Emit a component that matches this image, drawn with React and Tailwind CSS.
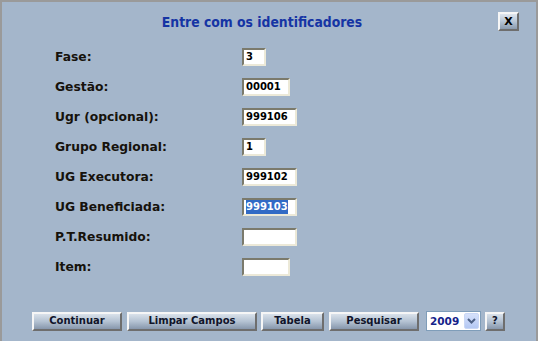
import React from "react";

const fields = [
  { label: "Fase:", value: "3", w: "w-[24px]" },
  { label: "Gestão:", value: "00001", w: "w-[48px]" },
  { label: "Ugr (opcional):", value: "999106", w: "w-[55px]" },
  { label: "Grupo Regional:", value: "1", w: "w-[24px]" },
  { label: "UG Executora:", value: "999102", w: "w-[55px]" },
  { label: "UG Beneficiada:", value: "999103", w: "w-[55px]", selected: true },
  { label: "P.T.Resumido:", value: "", w: "w-[55px]" },
  { label: "Item:", value: "", w: "w-[48px]" },
];

const btn =
  "h-[19px] flex items-center justify-center border-2 border-t-[#f6f6f6] border-l-[#f6f6f6] border-b-[#6e6e6e] border-r-[#6e6e6e] bg-gradient-to-b from-[#d9e1ea] via-[#b4c2d2] to-[#8797ac] text-[10px] font-bold text-[#10142a] leading-none";

function Field({ label, value, w, selected }) {
  return (
    <div className="flex items-center h-[30px]">
      <div className="w-[187px] text-[12.3px] font-bold text-[#16120c]">{label}</div>
      <div
        className={`${w} h-[18px] flex items-center bg-white border-2 border-t-[#7b7a6c] border-l-[#7b7a6c] border-b-[#ece9d8] border-r-[#ece9d8] pl-[2px] text-[10px] font-bold text-black leading-none overflow-hidden`}
      >
        {selected ? <span className="bg-[#316ac5] text-white py-[2px]">{value}</span> : value}
      </div>
    </div>
  );
}

export default function App() {
  return (
    <div className="w-[538px] h-[341px] bg-[#a4b6cb] border-t-2 border-l-2 border-r-2 border-[#9a9a9a] font-['DejaVu_Sans',sans-serif] overflow-hidden">
      {/* Header */}
      <div className="relative h-[40px] flex items-center justify-center pr-[14px]">
        <h1 className="font-['DejaVu_Sans_Condensed','Liberation_Sans',sans-serif] text-[13.8px] font-bold text-[#1534a4]">
          Entre com os identificadores
        </h1>
        <button className="absolute top-[10px] right-[17px] w-[21px] h-[19px] flex items-center justify-center border-2 border-t-[#f6f6f6] border-l-[#f6f6f6] border-b-[#6e6e6e] border-r-[#6e6e6e] bg-gradient-to-b from-[#dfe6ee] via-[#b7c5d5] to-[#8a9aae] text-[11px] font-bold text-black leading-none">
          X
        </button>
      </div>

      {/* Fields */}
      <div className="pl-[53px]">
        {fields.map((f) => (
          <Field key={f.label} {...f} />
        ))}
      </div>

      {/* Actions */}
      <div className="flex items-center mt-[29px] pl-[30px]">
        <button className={`${btn} w-[90px]`}>Continuar</button>
        <button className={`${btn} w-[130px] ml-[5px]`}>Limpar Campos</button>
        <button className={`${btn} w-[63px] ml-[4px]`}>Tabela</button>
        <button className={`${btn} w-[90px] ml-[5px]`}>Pesquisar</button>
        <div className="ml-[7px] w-[55px] h-[20px] flex items-center justify-between bg-white border border-[#7f9db9] pl-[3px] pr-[1px]">
          <span className="text-[10.5px] font-bold text-[#15238a] leading-none">2009</span>
          <span className="w-[15px] h-[16px] flex items-center justify-center bg-gradient-to-b from-[#d6e1fb] to-[#b4c8f3] border border-[#c9d7f5] rounded-[2px]">
            <svg width="9" height="6" viewBox="0 0 9 6">
              <path d="M1 1 L4.5 4.5 L8 1" fill="none" stroke="#4d6185" strokeWidth="2" />
            </svg>
          </span>
        </div>
        <button className={`${btn} w-[20px] ml-[4px]`}>?</button>
      </div>
    </div>
  );
}
